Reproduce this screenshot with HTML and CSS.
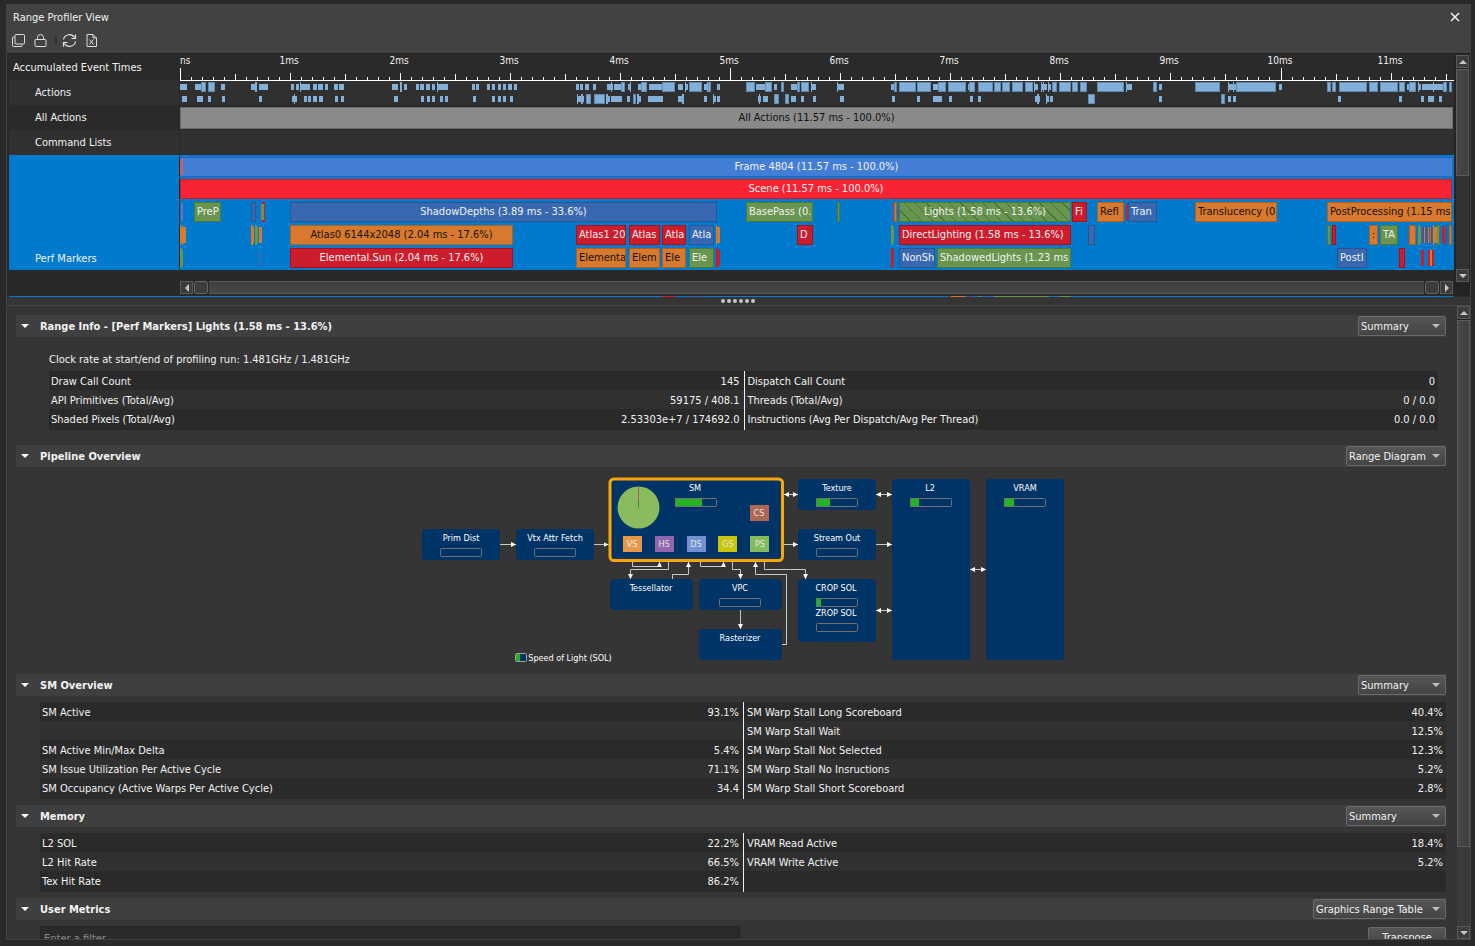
FILE: index.html
```
<!DOCTYPE html>
<html lang="en">
<head>
<meta charset="utf-8">
<title>Range Profiler View</title>
<link rel="stylesheet" href="styles.css">
</head>
<body>
<div class="window">
  <header class="titlebar">
    <h1 class="title">Range Profiler View</h1>
    <button class="icon-btn" aria-label="Close"><svg width="12" height="12" viewBox="0 0 12 12"><path d="M2 2l8 8M10 2l-8 8" stroke="#f4f4f4" stroke-width="1.5" fill="none"/></svg></button>
  </header>
  <div class="toolbar">
    <button class="icon-btn" aria-label="Copy view"><svg width="15" height="15" viewBox="0 0 15 15" fill="none" stroke="#dcdcdc"><rect x="4" y="1.5" width="9.5" height="9.5" rx="1"/><path d="M3.5 4H2.5a1 1 0 0 0-1 1v7.5a1 1 0 0 0 1 1H10a1 1 0 0 0 1-1V11.500"/></svg></button>
    <button class="icon-btn" aria-label="Lock"><svg width="15" height="15" viewBox="0 0 15 15" fill="none" stroke="#dcdcdc"><rect x="2" y="6.500" width="11" height="7" rx="1"/><path d="M4.500 6.500V4.500a3 3 0 0 1 6 0v2"/></svg></button>
    <span class="tool-sep"></span>
    <button class="icon-btn" aria-label="Refresh"><svg width="15" height="15" viewBox="0 0 15 15" fill="none" stroke="#e4e4e4" stroke-width="1.200"><path d="M1.500 6.500a6 6 0 0 1 11-2M13.500 1.500v4h-4M13.500 8.500a6 6 0 0 1-11 2M1.500 13.500v-4h4"/></svg></button>
    <button class="icon-btn" aria-label="Export to spreadsheet"><svg width="15" height="15" viewBox="0 0 15 15" fill="none" stroke="#dcdcdc"><path d="M3 1.500h6l3.500 3.500v8.500H3zM9 1.500V5h3.500M5.500 6.500l4 5M9.500 6.500l-4 5"/></svg></button>
  </div>

  <section class="timeline" aria-label="Timeline">
    <div class="labels">
      <div class="label label-top">Accumulated Event Times</div>
      <div class="label alt">Actions</div>
      <div class="label">All Actions</div>
      <div class="label alt">Command Lists</div>
      <div class="label selected">Perf Markers</div>
    </div>
    <div class="tracks">
      <div class="ruler" id="ruler"></div>
      <div class="actions alt">
        <div class="lane" id="actions-a"></div>
        <div class="lane" id="actions-b"></div>
      </div>
      <div class="track all"><div class="all-bar">All Actions (11.57 ms - 100.0%)</div></div>
      <div class="track alt"></div>
      <div class="perf" id="perf"></div>
      <div class="hscroll">
        <button class="arrow left" aria-label="Scroll left"></button>
        <span class="handle"></span><span class="hfill"></span><span class="handle"></span>
        <button class="arrow right" aria-label="Scroll right"></button>
      </div>
    </div>
    <div class="vscroll upper">
      <button class="arrow up" aria-label="Scroll up"></button>
      <span class="thumb"></span><span class="rest"></span>
      <button class="arrow down" aria-label="Scroll down"></button>
    </div>
    <div class="next-row" id="next-row"></div>
  </section>

  <div class="splitter"><i></i><i></i><i></i><i></i><i></i><i></i></div>

  <main class="details">
    <div class="content">
      <section>
        <div class="head"><h2>Range Info - [Perf Markers] Lights (1.58 ms - 13.6%)</h2><span class="combo w88"><select aria-label="Range info view"><option>Summary</option></select></span></div>
        <div class="range-info">
          <p class="clock">Clock rate at start/end of profiling run: 1.481GHz / 1.481GHz</p>
          <div class="grid"><table>
            <tr><td>Draw Call Count</td><td>145</td><td>Dispatch Call Count</td><td>0</td></tr>
            <tr><td>API Primitives (Total/Avg)</td><td>59175 / 408.1</td><td>Threads (Total/Avg)</td><td>0 / 0.0</td></tr>
            <tr><td>Shaded Pixels (Total/Avg)</td><td>2.53303e+7 / 174692.0</td><td>Instructions (Avg Per Dispatch/Avg Per Thread)</td><td>0.0 / 0.0</td></tr>
          </table></div>
        </div>
      </section>

      <section>
        <div class="head"><h2>Pipeline Overview</h2><span class="combo w100"><select aria-label="Pipeline view"><option>Range Diagram</option></select></span></div>
        <div class="diagram">
          <svg width="644" height="190" viewBox="421 475 644 190" role="img" aria-label="Pipeline diagram">
            <defs>
              <marker id="tip" markerUnits="userSpaceOnUse" markerWidth="6" markerHeight="6" refX="5" refY="2.500" orient="auto-start-reverse"><path d="M0 0L5 2.500L0 5z" fill="#fff"/></marker>
            </defs>
            <g class="node">
              <rect x="422" y="529" width="78" height="31" rx="4"/><rect x="516" y="529" width="78" height="31" rx="4"/>
              <rect x="610" y="579" width="83" height="31" rx="4"/><rect x="699" y="579" width="83" height="31" rx="4"/>
              <rect x="699" y="629" width="83" height="31" rx="4"/><rect x="798" y="479" width="78" height="31" rx="4"/>
              <rect x="798" y="529" width="78" height="31" rx="4"/><rect x="798" y="579" width="78" height="63" rx="4"/>
              <rect x="892" y="479" width="78" height="181" rx="4"/><rect x="986" y="479" width="78" height="181" rx="4"/>
            </g>
            <rect class="node-selected" x="610" y="479" width="172.500" height="81.500" rx="4"/>
            <g class="wire">
              <path d="M500 544.500H516" marker-end="url(#tip)"/><path d="M594 544.500H608.500" marker-end="url(#tip)"/>
              <path d="M784 494.500H798" marker-start="url(#tip)" marker-end="url(#tip)"/><path d="M784 544.500H798" marker-end="url(#tip)"/>
              <path d="M876 494.500H892" marker-start="url(#tip)" marker-end="url(#tip)"/><path d="M876 544.500H892" marker-end="url(#tip)"/>
              <path d="M876 610.500H892" marker-start="url(#tip)" marker-end="url(#tip)"/><path d="M970 569.500H986" marker-start="url(#tip)" marker-end="url(#tip)"/>
              <path d="M632.500 562V566.500H659.500V562" marker-end="url(#tip)"/><path d="M668.500 562V569.500H630.500V579" marker-end="url(#tip)"/>
              <path d="M672.500 579V574.500H688.500V562" marker-end="url(#tip)"/><path d="M700.500 562V566.500H723.500V562" marker-end="url(#tip)"/>
              <path d="M732.500 562V569.500H740.500V579" marker-end="url(#tip)"/><path d="M740.500 610V629" marker-end="url(#tip)"/>
              <path d="M782 644.500H786.500V574.500H755.500V562" marker-end="url(#tip)"/><path d="M764.500 562V569.500H805.500V579" marker-end="url(#tip)"/>
            </g>
            <g class="fill">
              <rect x="675" y="498" width="27" height="9"/><rect x="816" y="498" width="14" height="9"/><rect x="910" y="498" width="9" height="9"/>
              <rect x="1004" y="498" width="10" height="9"/><rect x="816" y="598" width="5" height="9"/>
            </g>
            <g class="meter">
              <rect x="440.500" y="548.500" width="41" height="8" rx="1"/><rect x="534.500" y="548.500" width="41" height="8" rx="1"/>
              <rect x="675.500" y="498.500" width="41" height="8" rx="1"/><rect x="719.500" y="598.500" width="41" height="8" rx="1"/>
              <rect x="816.500" y="498.500" width="41" height="8" rx="1"/><rect x="816.500" y="548.500" width="41" height="8" rx="1"/>
              <rect x="816.500" y="598.500" width="41" height="8" rx="1"/><rect x="816.500" y="623.500" width="41" height="8" rx="1"/>
              <rect x="910.500" y="498.500" width="41" height="8" rx="1"/><rect x="1004.500" y="498.500" width="41" height="8" rx="1"/>
            </g>
            <circle cx="638.500" cy="507.500" r="21" fill="#88bc5e"/>
            <path d="M638.500 507.500V487" stroke="#5d7350"/><path d="M639.500 487L639 500" stroke="#d59550"/>
            <g class="stage">
              <rect x="623" y="536" width="19" height="16" fill="#e8974a"/><rect x="655" y="536" width="19" height="16" fill="#9166ae"/>
              <rect x="687" y="536" width="19" height="16" fill="#7191d2"/><rect x="718" y="536" width="19" height="16" fill="#c9c40c"/>
              <rect x="750" y="536" width="19" height="16" fill="#84bb5d"/><rect x="750" y="505" width="19" height="16" fill="#ad6754"/>
              <text x="632" y="547">VS</text><text x="664" y="547">HS</text><text x="696" y="547">DS</text><text x="728" y="547">GS</text><text x="760" y="547">PS</text><text x="759" y="516">CS</text>
            </g>
            <g class="name">
              <text x="461" y="541">Prim Dist</text><text x="555" y="541">Vtx Attr Fetch</text><text x="695" y="491">SM</text>
              <text x="651" y="591">Tessellator</text><text x="740" y="591">VPC</text><text x="740" y="641">Rasterizer</text>
              <text x="837" y="491">Texture</text><text x="837" y="541">Stream Out</text><text x="836" y="591">CROP SOL</text><text x="836" y="616">ZROP SOL</text>
              <text x="930" y="491">L2</text><text x="1025" y="491">VRAM</text><text x="570" y="661">Speed of Light (SOL)</text>
            </g>
            <rect x="515.500" y="653.500" width="11" height="8" rx="1" fill="#003366" stroke="#a0a0a0"/><rect x="516" y="654" width="4" height="7" fill="#22b422"/>
          </svg>
        </div>
      </section>

      <section>
        <div class="head"><h2>SM Overview</h2><span class="combo w88"><select aria-label="SM view"><option>Summary</option></select></span></div>
        <div class="grid wide"><table>
          <tr><td>SM Active</td><td>93.1%</td><td>SM Warp Stall Long Scoreboard</td><td>40.4%</td></tr>
          <tr><td></td><td></td><td>SM Warp Stall Wait</td><td>12.5%</td></tr>
          <tr><td>SM Active Min/Max Delta</td><td>5.4%</td><td>SM Warp Stall Not Selected</td><td>12.3%</td></tr>
          <tr><td>SM Issue Utilization Per Active Cycle</td><td>71.1%</td><td>SM Warp Stall No Insructions</td><td>5.2%</td></tr>
          <tr><td>SM Occupancy (Active Warps Per Active Cycle)</td><td>34.4</td><td>SM Warp Stall Short Scoreboard</td><td>2.8%</td></tr>
        </table></div>
      </section>

      <section>
        <div class="head"><h2>Memory</h2><span class="combo w100"><select aria-label="Memory view"><option>Summary</option></select></span></div>
        <div class="grid wide"><table>
          <tr><td>L2 SOL</td><td>22.2%</td><td>VRAM Read Active</td><td>18.4%</td></tr>
          <tr><td>L2 Hit Rate</td><td>66.5%</td><td>VRAM Write Active</td><td>5.2%</td></tr>
          <tr><td>Tex Hit Rate</td><td>86.2%</td><td></td><td></td></tr>
        </table></div>
      </section>

      <section>
        <div class="head"><h2>User Metrics</h2><span class="combo w133"><select aria-label="Metrics view"><option>Graphics Range Table</option></select></span></div>
        <div class="filter-row"><input class="filter" type="text" placeholder="Enter a filter" aria-label="Filter"><button class="transpose">Transpose</button></div>
      </section>
    </div>
    <div class="vscroll">
      <button class="arrow up" aria-label="Scroll up"></button>
      <span class="thumb"></span><span class="rest"></span>
      <button class="arrow down" aria-label="Scroll down"></button>
    </div>
  </main>
</div>
<script src="timeline.js"></script>
</body>
</html>
```
FILE: styles.css
```
* { box-sizing: border-box; }
body {
  margin: 0;
  height: 100vh;
  padding: 4px 4px 6px 6px;
  background: #292929;
  color: #f2f2f2;
  font: 11px/14px "DejaVu Sans Condensed", "DejaVu Sans", sans-serif;
  overflow: hidden;
}
button, input, select { font: inherit; color: inherit; }
h1, h2, p { margin: 0; font-size: 11px; }
.window {
  height: 100%;
  display: flex;
  flex-direction: column;
  border: 1px solid #424242;
  border-top: 0;
  background: #353535;
  overflow: hidden;
}
.titlebar, .toolbar { background: #424242; display: flex; align-items: center; flex: none; }
.titlebar { height: 25px; justify-content: space-between; padding: 0 9px 0 6px; }
.title { font-weight: normal; padding-top: 2px; }
.toolbar { height: 24px; padding: 0 4px 2px; gap: 7px; }
.icon-btn { border: 0; background: none; padding: 0; display: flex; }
.tool-sep { width: 2px; height: 10px; background: #333; margin-right: -2px; }

.timeline {
  flex: none;
  display: grid;
  grid-template-columns: 170px 1fr 16px;
  grid-template-rows: 1fr 1px;
  padding: 1px 0 0 2px;
  background: #292929;
  border-top: 1px solid #222;
}
.label { height: 25px; padding-left: 26px; display: flex; align-items: center; background: #2a2a2a; }
.label-top { padding-left: 4px; }
.label.alt, .alt { background: #303030; }
.label.selected { height: 115px; background: #007acc; align-items: flex-end; padding-bottom: 4px; }
.tracks { margin-left: 1px; min-width: 0; }
.ruler { position: relative; height: 26px; margin-bottom: -1px; overflow: hidden; border-bottom: 1px solid #fff; font-size: 10px; line-height: 12px; background: #2a2a2a; }
.ruler span { position: absolute; top: 0; width: 40px; margin-left: -21px; text-align: center; }
.ruler .origin { margin-left: 0; text-align: left; }
.ruler i { position: absolute; bottom: 0; width: 1px; background: #fff; height: 3px; }
.ruler i.half { height: 6px; }
.ruler i.ms { height: 7px; }
.ruler i.major { height: 12px; }
.actions { height: 25px; padding-top: 2px; display: grid; grid-template-rows: 10px 10px; row-gap: 2px; }
.lane { position: relative; }
.lane b { position: absolute; top: 2px; height: 6px; background: #83b0d9; }
.lane b.large { top: 0; height: 10px; border: 1px solid #5f8bb2; }
.lane b.tall { top: 0; height: 10px; }
.track { height: 25px; }
.track.all { padding: 2px 1px 1px 0; background: #2a2a2a; }
.all-bar { height: 22px; background: #8a8a8a; border: 1px solid #6c6c6c; color: #111; text-align: center; line-height: 20px; }

.perf { height: 115px; background: #007acc; padding-top: 2px; display: grid; grid-template-rows: 20px 19px 20px 20px 20px; row-gap: 3px; }
.row { position: relative; }
.bar { position: absolute; top: 0; height: 20px; border: 1px solid; padding: 0 3px; line-height: 18px; text-align: center; }
.row-scene .bar { top: -1px; }
.bar span { display: block; overflow: hidden; white-space: nowrap; }
.bar.inner { top: 2px; height: 16px; border: 0; padding: 0; }
.bar.clip { text-align: left; padding: 0 0 0 2px; }
.bar.thin { padding: 0; }
.bar.flat { border: 0; padding: 0; }
.blue { background: #3868b0; border-color: #2a5591; }
.sky { background: #427dd6; border-color: #2c66b4; }
.bright { background: #f82333; border-color: #c31c28; }
.red { background: #cd1c2c; border-color: #a3121f; }
.green { background: #69954e; border-color: #4d7a38; }
.orange { background: #d87a2e; border-color: #ad6120; color: #16110c; }
.pink { background: #c26067; }
.hatch { background-image: repeating-linear-gradient(45deg, transparent 0 7px, #4b7337 7px 8px); }

.hscroll { margin: 11px 1px 2px 0; height: 13px; display: flex; }
.hfill { flex: 1; background: linear-gradient(#3d3d3d, #484848); border: 1px solid #595959; border-width: 1px 0; }
.handle { width: 14px; margin: 0 1px; border: 1px solid #686868; border-radius: 3px; background: #3c3c3c; }
.arrow { width: 13px; height: 13px; padding: 0; border: 1px solid #5a5a5a; background: #3c3c3c; display: flex; align-items: center; justify-content: center; flex: none; }
.arrow::before { content: ""; border: 4px solid transparent; }
.up::before { border-top: 0; border-bottom-color: #c8c8c8; }
.down::before { border-bottom: 0; border-top-color: #c8c8c8; }
.left::before { border-left: 0; border-right-color: #c8c8c8; }
.right::before { border-right: 0; border-left-color: #c8c8c8; }
.vscroll { display: flex; flex-direction: column; width: 13px; background: #242424; }
.vscroll .thumb { background: linear-gradient(90deg, #484848, #3f3f3f); border: 1px solid #5c5c5c; margin-top: 1px; flex: 527; }
.vscroll .rest { background: #3a3a3a; flex: 79; }
.vscroll.upper { width: auto; padding: 0 1px 14px 2px; }
.upper .thumb { flex: 107; }
.upper .rest { flex: 94; background: #323232; }
.next-row { position: relative; grid-column: 1 / 3; height: 1px; background: #007acc; }
.next-row b { position: absolute; top: 0; height: 1px; }

.splitter { flex: none; height: 9px; display: flex; gap: 2px; justify-content: center; align-items: center; border-bottom: 1px solid #454545; padding-right: 2px; }
.splitter i { width: 4px; height: 4px; border-radius: 2px; background: #c6c6c6; }

.details { flex: 1; min-height: 0; display: flex; overflow: hidden; }
.content { flex: 1; min-width: 0; padding: 9px 11px 0 9px; }
.head { height: 22px; background: #3f3f3f; display: flex; align-items: center; justify-content: space-between; padding-left: 5px; }
.head h2 { display: flex; align-items: flex-start; padding-top: 2px; }
.head h2::before { content: ""; border: 4px solid transparent; border-bottom: 0; border-top-color: #fff; margin: 4px 11px 0 0; }
.combo { position: relative; }
.combo select {
  display: block;
  width: 100%;
  height: 20px;
  appearance: none;
  border: 1px solid #6a6a6a;
  border-radius: 2px;
  background: linear-gradient(#565656, #444);
  padding: 2px 2px 0;
}
.combo::after { content: ""; position: absolute; right: 6px; top: 8px; border: 4px solid transparent; border-bottom: 0; border-top-color: #bdbdbd; pointer-events: none; }
.w88 { width: 88px; }
.w100 { width: 100px; }
.w133 { width: 133px; }
.range-info { padding: 16px 8px 15px 33px; }
.clock { margin-bottom: 4px; }
.grid { position: relative; background: #2a2a2a; padding-bottom: 2px; }
.grid::after { content: ""; position: absolute; top: 0; bottom: 0; left: 50%; width: 1px; background: #f0f0f0; }
.grid.wide { margin: 6px 0 6px 24px; }
table { width: 100%; table-layout: fixed; border-collapse: collapse; }
td { padding: 2px 3px 0 2px; height: 19px; line-height: 17px; white-space: nowrap; }
td:nth-child(1), td:nth-child(3) { width: 35%; }
td:nth-child(2), td:nth-child(4) { width: 15%; text-align: right; }
td:nth-child(2) { padding-right: 4px; }
td:nth-child(3) { padding-left: 4px; }
tr:nth-child(even) { background: #303030; }
.diagram { height: 207px; padding: 8px 0 0 24px; display: flex; justify-content: center; }
.diagram svg { display: block; flex: none; }
.node rect { fill: #003366; }
.node-selected { fill: #003366; stroke: #ffa500; stroke-width: 3px; }
.wire path { fill: none; stroke: #c8c8c8; }
.fill rect { fill: #22b422; }
.meter rect { fill: none; stroke: #707070; }
.stage text { font-size: 9px; text-anchor: middle; fill: #e6e6e6; }
.name text { font-size: 9px; text-anchor: middle; fill: #fff; }
.filter-row { display: flex; justify-content: space-between; align-items: flex-start; padding: 6px 0 0 24px; }
.filter { width: 700px; height: 24px; background: #2a2a2a; border: 1px solid #232323; padding: 0 3px; }
.filter::placeholder { color: #8a8a8a; opacity: 1; }
.transpose { width: 78px; height: 21px; margin-top: 1px; border: 1px solid #6a6a6a; border-radius: 2px; background: linear-gradient(#565656, #444); padding: 0; }
```
FILE: timeline.js
```
// Timeline positions are in track units: the track runs from ORIGIN to ORIGIN + SPAN.
const ORIGIN = 180;
const SPAN = 1274;
const MS = 110.1;
const pct = v => (v / SPAN * 100) + '%';

function place(el, from, to) {
  el.style.left = pct(from - ORIGIN);
  if (to !== undefined) el.style.width = pct(to - from);
  return el;
}

function make(tag, cls, parent) {
  const el = document.createElement(tag);
  if (cls) el.className = cls;
  parent.appendChild(el);
  return el;
}

const ruler = document.getElementById('ruler');
for (let t = 0; t <= 115; t++) {
  const cls = t % 50 === 0 ? 'major' : t % 10 === 0 ? 'ms' : t % 5 === 0 ? 'half' : '';
  const at = ORIGIN + Math.floor(t * MS / 10);
  place(make('i', cls, ruler), at);
  if (t === 0) place(make('span', 'origin', ruler), at).textContent = 'ns';
  else if (t % 10 === 0) place(make('span', '', ruler), at).textContent = t / 10 + 'ms';
}

// Plain spans are short events, L marks a large one, T a thin full-height one.
const actions = {
  'actions-a': '180-187 195-201 L201-206 L208-215 221-225 251-255 T255-257 259-268 291-294 296-299 T300-301 301-310 313-317 318-323 325-328 334-338 339-344 392-398 T400-402 404-407 416-419 420-424 426-430 432-435 T437-438 438-448 472-475 476-479 487-490 492-495 498-501 503-506 508-512 514-517 576-579 580-583 585-589 593-596 607-613 T611-612 614-621 L621-625 628-631 T630-631 638-641 L641-647 649-662 L662-675 678-683 T685-686 685-688 L689-702 704-709 T707-708 L708-711 717-720 L746-755 756-765 L765-772 774-777 L781-784 791-797 L797-800 L801-809 T811-812 811-816 T837-838 837-844 891-894 L894-897 L899-916 L917-931 933-938 L938-946 L948-966 968-970 L969-975 L978-993 L994-1001 L1002-1010 L1012-1023 L1025-1033 T1034-1035 1034-1038 1041-1047 T1041-1042 T1043-1044 T1048-1049 1048-1051 L1052-1057 L1059-1071 L1072-1078 L1080-1087 L1097-1124 T1126-1127 1126-1132 L1153-1157 1159-1162 L1195-1220 T1228-1229 1228-1236 T1233-1234 L1236-1276 1279-1282 L1327-1331 L1332-1336 L1339-1367 L1369-1378 L1380-1398 L1399-1405 1407-1409 L1409-1416 T1418-1419 1418-1421 1422-1443 T1433-1434 L1443-1447 L1449-1452',
  'actions-b': '182-187 197-203 208-211 222-225 259-262 292-297 T294-295 304-307 308-311 313-317 319-323 335-338 341-344 394-398 421-424 427-430 432-435 440-443 445-448 473-476 492-495 498-501 503-506 510-513 577-584 T577-578 T581-583 L586-591 L594-605 T606-608 606-610 611-622 627-630 L633-636 T637-639 637-641 648-663 678-683 T682-684 704-707 T713-714 713-716 717-720 758-761 T759-760 763-768 L774-779 L785-789 791-796 801-804 813-816 840-844 892-895 917-920 933-942 949-952 970-973 978-981 1035-1040 T1037-1039 T1046-1047 1046-1049 1050-1053 L1088-1095 1159-1162 L1221-1225 1228-1231 1233-1236 1338-1341 1399-1402 1421-1424 1428-1434 1439-1442'
};
for (const [id, spans] of Object.entries(actions)) {
  const lane = document.getElementById(id);
  for (const item of spans.split(' ')) {
    const cls = item[0] === 'L' ? 'large' : item[0] === 'T' ? 'tall' : '';
    const [from, to] = item.replace(/^[LT]/, '').split('-').map(Number);
    place(make('b', cls, lane), from, to);
  }
}

const markers = [
  [[180, 1453, 'sky', 'Frame 4804 (11.57 ms - 100.0%)'], [180, 183, 'pink inner']],
  [[180, 1452, 'bright', 'Scene (11.57 ms - 100.0%)']],
  [[180, 184, 'sky thin'], [194, 221, 'green clip', 'PreP'], [251, 256, 'blue thin'], [259, 262, 'blue inner'], [262, 265, 'red flat'], [261, 264, 'green inner'],
    [290, 717, 'blue', 'ShadowDepths (3.89 ms - 33.6%)'], [746, 813, 'green clip', 'BasePass (0.'], [837, 840, 'green thin'],
    [891, 894, 'blue flat'], [894, 897, 'orange thin'], [899, 1071, 'green hatch', 'Lights (1.58 ms - 13.6%)'], [1072, 1087, 'red clip', 'Fi'],
    [1097, 1124, 'orange clip', 'Refl'], [1126, 1128, 'red inner'], [1128, 1157, 'blue clip', 'Tran'], [1195, 1277, 'orange clip', 'Translucency (0'],
    [1327, 1452, 'orange clip', 'PostProcessing (1.15 ms']],
  [[180, 181, 'orange flat'], [182, 183, 'orange flat'], [180, 186, 'orange inner'], [251, 253, 'orange flat'], [253, 254, 'orange inner'], [255, 257, 'green flat'], [257, 258, 'green inner'], [259, 262, 'orange inner'],
    [290, 513, 'orange', 'Atlas0 6144x2048 (2.04 ms - 17.6%)'], [576, 626, 'red clip', 'Atlas1 20'], [629, 660, 'red clip', 'Atlas'], [662, 686, 'red clip', 'Atla'], [689, 714, 'blue clip', 'Atla'],
    [716, 717, 'orange flat'], [716, 720, 'orange inner'], [797, 813, 'red clip', 'D'], [891, 893, 'green flat'], [893, 894, 'green inner'],
    [899, 1071, 'red clip', 'DirectLighting (1.58 ms - 13.6%)'], [1088, 1095, 'blue thin'], [1327, 1331, 'green thin'], [1332, 1336, 'red thin'],
    [1369, 1378, 'orange thin', ':'], [1380, 1398, 'green clip', 'TA'], [1407, 1409, 'blue inner'], [1409, 1416, 'orange thin'],
    [1418, 1420, 'green flat'], [1420, 1421, 'green inner'], [1423, 1424, 'red inner'], [1424, 1425, 'orange inner'], [1426, 1427, 'red inner'], [1428, 1429, 'orange inner'], [1430, 1431, 'green inner'], [1431, 1432, 'red inner'],
    [1433, 1434, 'orange flat'], [1436, 1440, 'green thin'], [1434, 1437, 'orange inner'], [1443, 1447, 'blue thin'], [1442, 1445, 'red inner'], [1449, 1452, 'orange thin']],
  [[180, 182, 'green flat'], [182, 183, 'green inner'], [259, 261, 'blue inner'], [290, 513, 'red', 'Elemental.Sun (2.04 ms - 17.6%)'],
    [576, 626, 'orange clip', 'Elementa'], [629, 660, 'orange clip', 'Elem'], [662, 686, 'orange clip', 'Ele'], [689, 714, 'green clip', 'Ele'],
    [716, 718, 'red flat'], [718, 720, 'red inner'], [891, 893, 'red flat'], [893, 894, 'red inner'], [899, 935, 'blue clip', 'NonSh'],
    [937, 1071, 'green clip', 'ShadowedLights (1.23 ms'], [1337, 1367, 'blue clip', 'PostI'], [1399, 1405, 'red thin'],
    [1421, 1424, 'red inner'], [1428, 1434, 'red inner'], [1430, 1432, 'orange inner']]
];
const fullLabels = { Elem: 'Eleme', Ele: 'Elem' };
const perf = document.getElementById('perf');
markers.forEach((bars, i) => {
  const row = make('div', i === 1 ? 'row row-scene' : 'row', perf);
  for (const [from, to, cls, text] of bars) {
    const bar = place(make('div', 'bar ' + cls, row), from, to);
    if (!text) continue;
    const label = make('span', '', bar);
    label.textContent = fullLabels[text] || text;
    if (label.scrollWidth > label.clientWidth + 2) label.textContent = text;
  }
});

// Top edge of the following row; its strip also covers the label column.
const next = document.getElementById('next-row');
const LABELS = 171;
for (const [from, to, cls] of [[662, 675, 'red'], [689, 702, 'blue'], [949, 951, 'red'], [951, 965, 'orange'], [968, 971, 'red'], [978, 981, 'green'], [981, 993, 'blue'], [994, 1049, 'green'], [1052, 1058, 'blue'], [1059, 1071, 'green']]) {
  const mark = make('b', cls, next);
  mark.style.left = (from - ORIGIN + LABELS) / (SPAN + LABELS) * 100 + '%';
  mark.style.width = (to - from) / (SPAN + LABELS) * 100 + '%';
}
```
